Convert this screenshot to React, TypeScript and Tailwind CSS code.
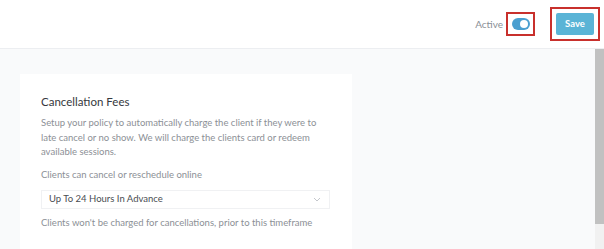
import React from 'react';

const App = () => {
  return (
    <div className="flex h-[249px] w-[604px] flex-col overflow-hidden bg-white font-['Lato',sans-serif]">
      <header className="flex h-[49px] shrink-0 items-center justify-end border-b border-[#eceef1] pr-[4px]">
        <span className="mr-[3px] text-[10px] text-[#8a8f96]">Active</span>
        <div className="flex h-[24px] w-[29px] items-center justify-center border-2 border-[#c8302c]">
          <div className="flex h-[12px] w-[18px] items-center justify-end rounded-full bg-[#4a9fd0] pr-[2px]">
            <div className="h-[8px] w-[8px] rounded-full bg-white" />
          </div>
        </div>
        <div className="ml-[15px] flex h-[34px] w-[50px] items-center justify-center border-2 border-[#c8302c]">
          <button className="h-[22px] w-[38px] rounded-[2px] bg-[#5ab4d6] text-[9.5px] font-bold text-white">
            Save
          </button>
        </div>
      </header>
      <div className="flex min-h-0 flex-1">
        <main className="flex-1 bg-[#f9fafb] pl-[20px] pt-[25px]">
          <section className="h-full w-[332px] bg-white px-[21px] pt-[20px]">
            <h2 className="text-[11.5px] leading-[16px] text-[#35383d]">Cancellation Fees</h2>
            <p className="mt-[6px] text-[9.5px] leading-[14.5px] text-[#8c9096]">
              Setup your policy to automatically charge the client if they were to late cancel or no show. We will
              charge the clients card or redeem available sessions.
            </p>
            <div className="mt-[8px] text-[9.5px] leading-[14px] text-[#8c9096]">Clients can cancel or reschedule online</div>
            <div className="mt-[8px] flex h-[19px] w-[289px] items-center justify-between border border-[#f0f1f3] pl-[7px] pr-[8px]">
              <span className="text-[9.5px] text-[#4a4d52]">Up To 24 Hours In Advance</span>
              <svg width="8" height="5" viewBox="0 0 8 5" fill="none">
                <path d="M1 1l3 3 3-3" stroke="#c4c7cc" strokeWidth="1" />
              </svg>
            </div>
            <div className="mt-[7px] text-[9.5px] leading-[14px] text-[#8c9096]">
              Clients won't be charged for cancellations, prior to this timeframe
            </div>
          </section>
        </main>
        <div className="flex w-[9px] flex-col bg-[#f1f1f1]">
          <div className="h-[175px] bg-[#c1c1c1]" />
        </div>
      </div>
    </div>
  );
};

export default App;
